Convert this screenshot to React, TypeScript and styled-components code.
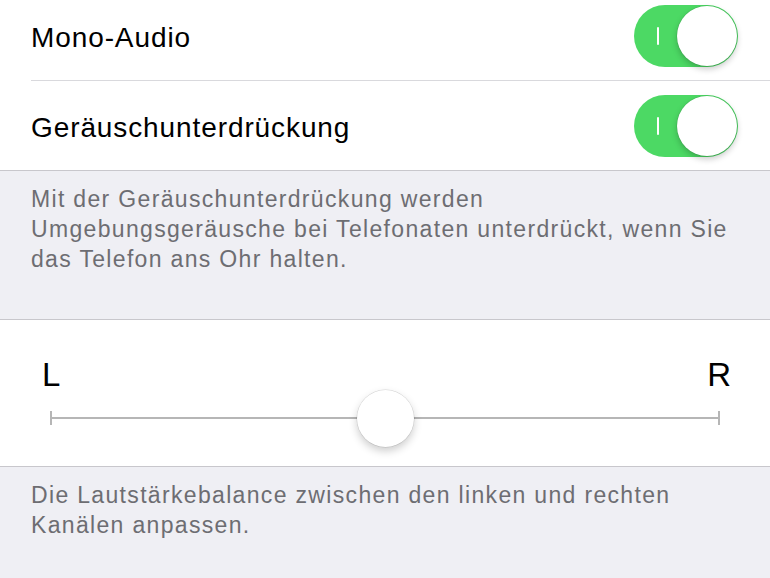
import React from 'react'
import styled, { createGlobalStyle } from 'styled-components'

const GlobalStyle = createGlobalStyle`
  html, body {
    margin: 0;
    padding: 0;
    background: #efeff4;
    font-family: "Liberation Sans", Arial, sans-serif;
    -webkit-font-smoothing: antialiased;
  }
`

const Page = styled.div`
  width: 770px;
  height: 578px;
  overflow: hidden;
  background: #efeff4;
`

const Group = styled.div<{ $shift?: number }>`
  background: #ffffff;
  border-top: 1.5px solid #c8c7cc;
  border-bottom: 1.5px solid #c8c7cc;
  margin-top: ${(p) => p.$shift ?? 0}px;
`

const Row = styled.div`
  height: 89px;
  display: flex;
  align-items: center;
  justify-content: space-between;
  margin-left: 31px;
  padding-right: 32px;
  & + & {
    border-top: 1.5px solid #d9d9dd;
  }
`

const Label = styled.span`
  font-size: 28px;
  color: #000;
  letter-spacing: 0.9px;
  padding-top: 5px;
`

const Toggle = styled.div<{ $on: boolean }>`
  position: relative;
  width: 104px;
  height: 62px;
  border-radius: 31px;
  background: ${(p) => (p.$on ? '#4cd964' : '#e5e5ea')};
  display: flex;
  align-items: center;
  justify-content: ${(p) => (p.$on ? 'flex-end' : 'flex-start')};
  padding: 0 1px;
  box-sizing: border-box;
`

const OnMark = styled.span`
  position: absolute;
  left: 23px;
  top: 22px;
  width: 2px;
  height: 18px;
  background: #ffffff;
  border-radius: 1px;
`

const Knob = styled.div<{ $size: number }>`
  width: ${(p) => p.$size}px;
  height: ${(p) => p.$size}px;
  border-radius: 50%;
  background: #ffffff;
  box-shadow: 0 3px 6px rgba(0, 0, 0, 0.22), 0 0 0 0.5px rgba(0, 0, 0, 0.12);
`

const Footer = styled.div<{ $height: number }>`
  height: ${(p) => p.$height}px;
  box-sizing: border-box;
  padding: 13px 20px 0 31px;
  font-size: 23px;
  line-height: 30px;
  letter-spacing: 1.33px;
  color: #6d6d72;
  white-space: nowrap;
`

const BalanceBody = styled.div`
  height: 146px;
  padding: 37px 50px 0 50px;
  box-sizing: border-box;
`

const Ends = styled.div`
  display: flex;
  justify-content: space-between;
  font-size: 33px;
  line-height: 36px;
  color: #000;
  margin: 0 -11px 0 -8px;
`

const Track = styled.div`
  position: relative;
  height: 58px;
  display: flex;
  align-items: center;
  justify-content: center;
  margin-top: -4px;
  &::before {
    content: '';
    position: absolute;
    left: 0;
    right: 0;
    top: 28px;
    height: 2px;
    background: #b6b6b6;
  }
`

const Tick = styled.span<{ $side: 'left' | 'right' }>`
  position: absolute;
  ${(p) => p.$side}: 0;
  top: 22px;
  width: 2px;
  height: 14px;
  background: #b6b6b6;
`

const Thumb = styled(Knob)`
  position: relative;
  box-shadow: 0 4px 8px rgba(0, 0, 0, 0.2), 0 0 0 0.5px rgba(0, 0, 0, 0.15);
`

const Switch: React.FC<{ on: boolean }> = ({ on }) => (
  <Toggle $on={on}>
    {on && <OnMark />}
    <Knob $size={60} />
  </Toggle>
)

const App: React.FC = () => {
  const rows = [
    { name: 'Mono-Audio', on: true },
    { name: 'Geräuschunterdrückung', on: true },
  ]

  return (
    <Page>
      <GlobalStyle />
      <Group $shift={-10}>
        {rows.map((row) => (
          <Row key={row.name}>
            <Label>{row.name}</Label>
            <Switch on={row.on} />
          </Row>
        ))}
      </Group>
      <Footer $height={148}>
        Mit der Geräuschunterdrückung werden
        <br />
        Umgebungsgeräusche bei Telefonaten unterdrückt, wenn Sie
        <br />
        das Telefon ans Ohr halten.
      </Footer>
      <Group>
        <BalanceBody>
          <Ends>
            <span>L</span>
            <span>R</span>
          </Ends>
          <Track>
            <Tick $side="left" />
            <Tick $side="right" />
            <Thumb $size={57} />
          </Track>
        </BalanceBody>
      </Group>
      <Footer $height={110}>
        Die Lautstärkebalance zwischen den linken und rechten
        <br />
        Kanälen anpassen.
      </Footer>
    </Page>
  )
}

export default App
